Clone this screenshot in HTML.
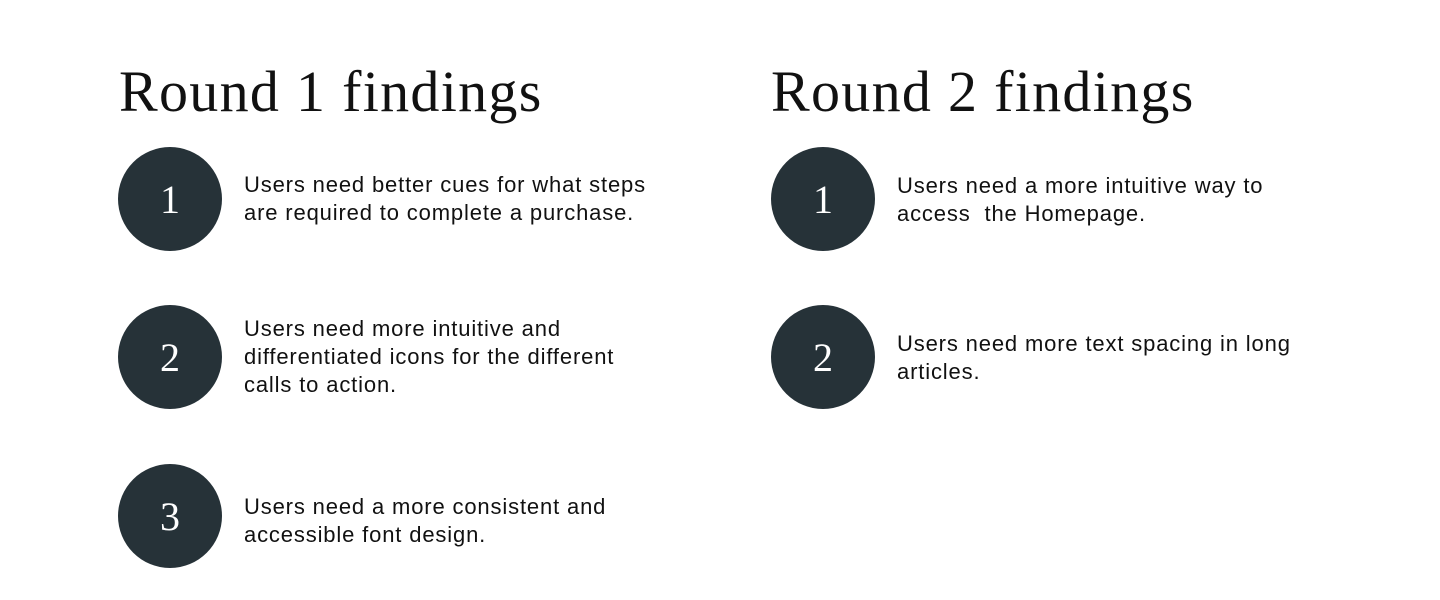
<!DOCTYPE html>
<html><head><meta charset="utf-8"><style>
body{margin:0;width:1440px;height:600px;background:#fff;position:relative;overflow:hidden;font-family:"Liberation Sans",sans-serif;}
h1{position:absolute;margin:0;font-family:"Liberation Serif",serif;font-weight:normal;font-size:58px;color:#111;line-height:1;top:63px;letter-spacing:1.3px}
.c{position:absolute;width:104px;height:104px;border-radius:50%;background:#263238;color:#fff;font-family:"Liberation Serif",serif;font-size:40px;display:flex;align-items:center;justify-content:center}
.t{position:absolute;font-size:22px;line-height:28px;color:#111;white-space:nowrap;letter-spacing:0.85px}
</style></head><body>
<h1 style="left:119px">Round 1 findings</h1>
<h1 style="left:771px">Round 2 findings</h1>
<div class="c" style="left:118px;top:147px">1</div>
<div class="t" style="left:244px;top:171px">Users need better cues for what steps<br>are required to complete a purchase.</div>
<div class="c" style="left:118px;top:305px">2</div>
<div class="t" style="left:244px;top:315px">Users need more intuitive and<br>differentiated icons for the different<br>calls to action.</div>
<div class="c" style="left:118px;top:464px">3</div>
<div class="t" style="left:244px;top:493px">Users need a more consistent and<br>accessible font design.</div>
<div class="c" style="left:771px;top:147px">1</div>
<div class="t" style="left:897px;top:172px">Users need a more intuitive way to<br>access &nbsp;the Homepage.</div>
<div class="c" style="left:771px;top:305px">2</div>
<div class="t" style="left:897px;top:330px">Users need more text spacing in long<br>articles.</div>
</body></html>
